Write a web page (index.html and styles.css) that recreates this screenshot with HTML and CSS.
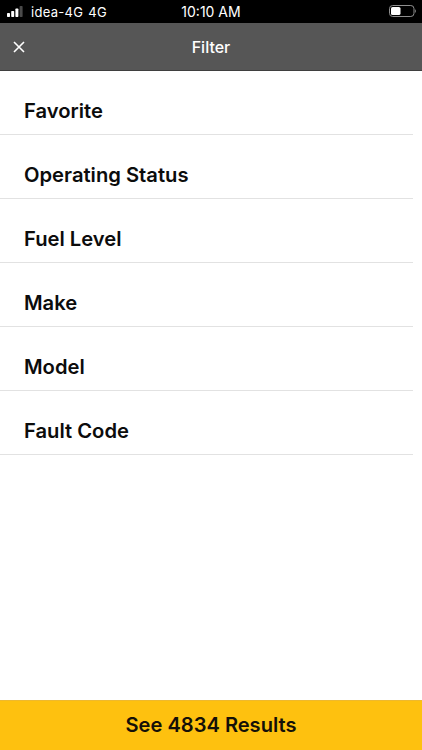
FILE: index.html
```html
<!DOCTYPE html>
<html lang="en">
<head>
<meta charset="utf-8">
<title>Filter</title>
<link rel="stylesheet" href="styles.css">
</head>
<body>
<div class="app">
  <div class="status">
    <div class="status-left">
      <svg class="signal" width="16" height="11" viewBox="0 0 16 11"><rect x="0" y="7" width="3" height="4" rx=".7" fill="#fff"/><rect x="4.2" y="5" width="3" height="6" rx=".7" fill="#fff"/><rect x="8.4" y="2.6" width="3" height="8.4" rx=".7" fill="#fff"/><rect x="12.6" y="0" width="3" height="11" rx=".7" fill="#4a4a4a"/></svg>
      <span>idea-4G</span><span>4G</span>
    </div>
    <div class="status-time">10:10 AM</div>
    <div class="status-right">
      <svg class="battery" width="28" height="12" viewBox="0 0 28 12"><rect x=".5" y=".5" width="24.5" height="11" rx="3.2" fill="none" stroke="#8f8f8f"/><rect x="2" y="2" width="9.5" height="8" rx="1.6" fill="#fff"/><path d="M26.2 4.2c1.1.3 1.1 3.3 0 3.6z" fill="#8f8f8f"/></svg>
    </div>
  </div>
  <header class="nav">
    <svg class="close" width="12" height="12" viewBox="0 0 12 12"><path d="M1 1l10 10M11 1L1 11" stroke="#fff" stroke-width="1.6" fill="none"/></svg>
    <div class="nav-title">Filter</div>
  </header>
  <main class="list">
    <div class="row">Favorite</div>
    <div class="row">Operating Status</div>
    <div class="row">Fuel Level</div>
    <div class="row">Make</div>
    <div class="row">Model</div>
    <div class="row">Fault Code</div>
  </main>
  <button class="results">See 4834 Results</button>
</div>
</body>
</html>
```
FILE: styles.css
```css
* { box-sizing: border-box; }
html, body { margin: 0; padding: 0; }
body { font-family: Inter, "Liberation Sans", sans-serif; background: #fff; }
.app { width: 422px; height: 750px; display: flex; flex-direction: column; overflow: hidden; }
.status { height: 23px; flex: none; background: #000; color: #fff; display: grid; grid-template-columns: 1fr auto 1fr; align-items: center; padding: 0 5px; font-size: 13px; line-height: 22px; }
.status-left { display: flex; align-items: center; gap: 5px; letter-spacing: .3px; margin-left: 2px; }
.status-left span:first-of-type { margin-left: 3px; }
.status-time { font-size: 14px; }
.status-right { display: flex; justify-content: flex-end; }
.battery { margin-bottom: 1px; }
.nav { height: 48px; flex: none; background: #565656; border-bottom: 1px solid #3f3f3f; display: flex; align-items: center; justify-content: center; position: relative; color: #fff; }
.close { position: absolute; left: 13px; top: 18px; }
.nav-title { font-size: 16px; font-weight: 500; }
.list { flex: 1; }
.row { height: 64px; margin-right: 9px; padding: 28px 0 0 24px; font-size: 20.2px; line-height: 23px; font-weight: 600; color: #0c0c0c; border-bottom: 1px solid #e2e2e2; }
.results { height: 50px; flex: none; border: 0; border-top: 1px solid #eeb92e; background: #fec10f; color: #141008; font: 600 20.1px Inter, "Liberation Sans", sans-serif; padding: 0 0 1px; }
```
